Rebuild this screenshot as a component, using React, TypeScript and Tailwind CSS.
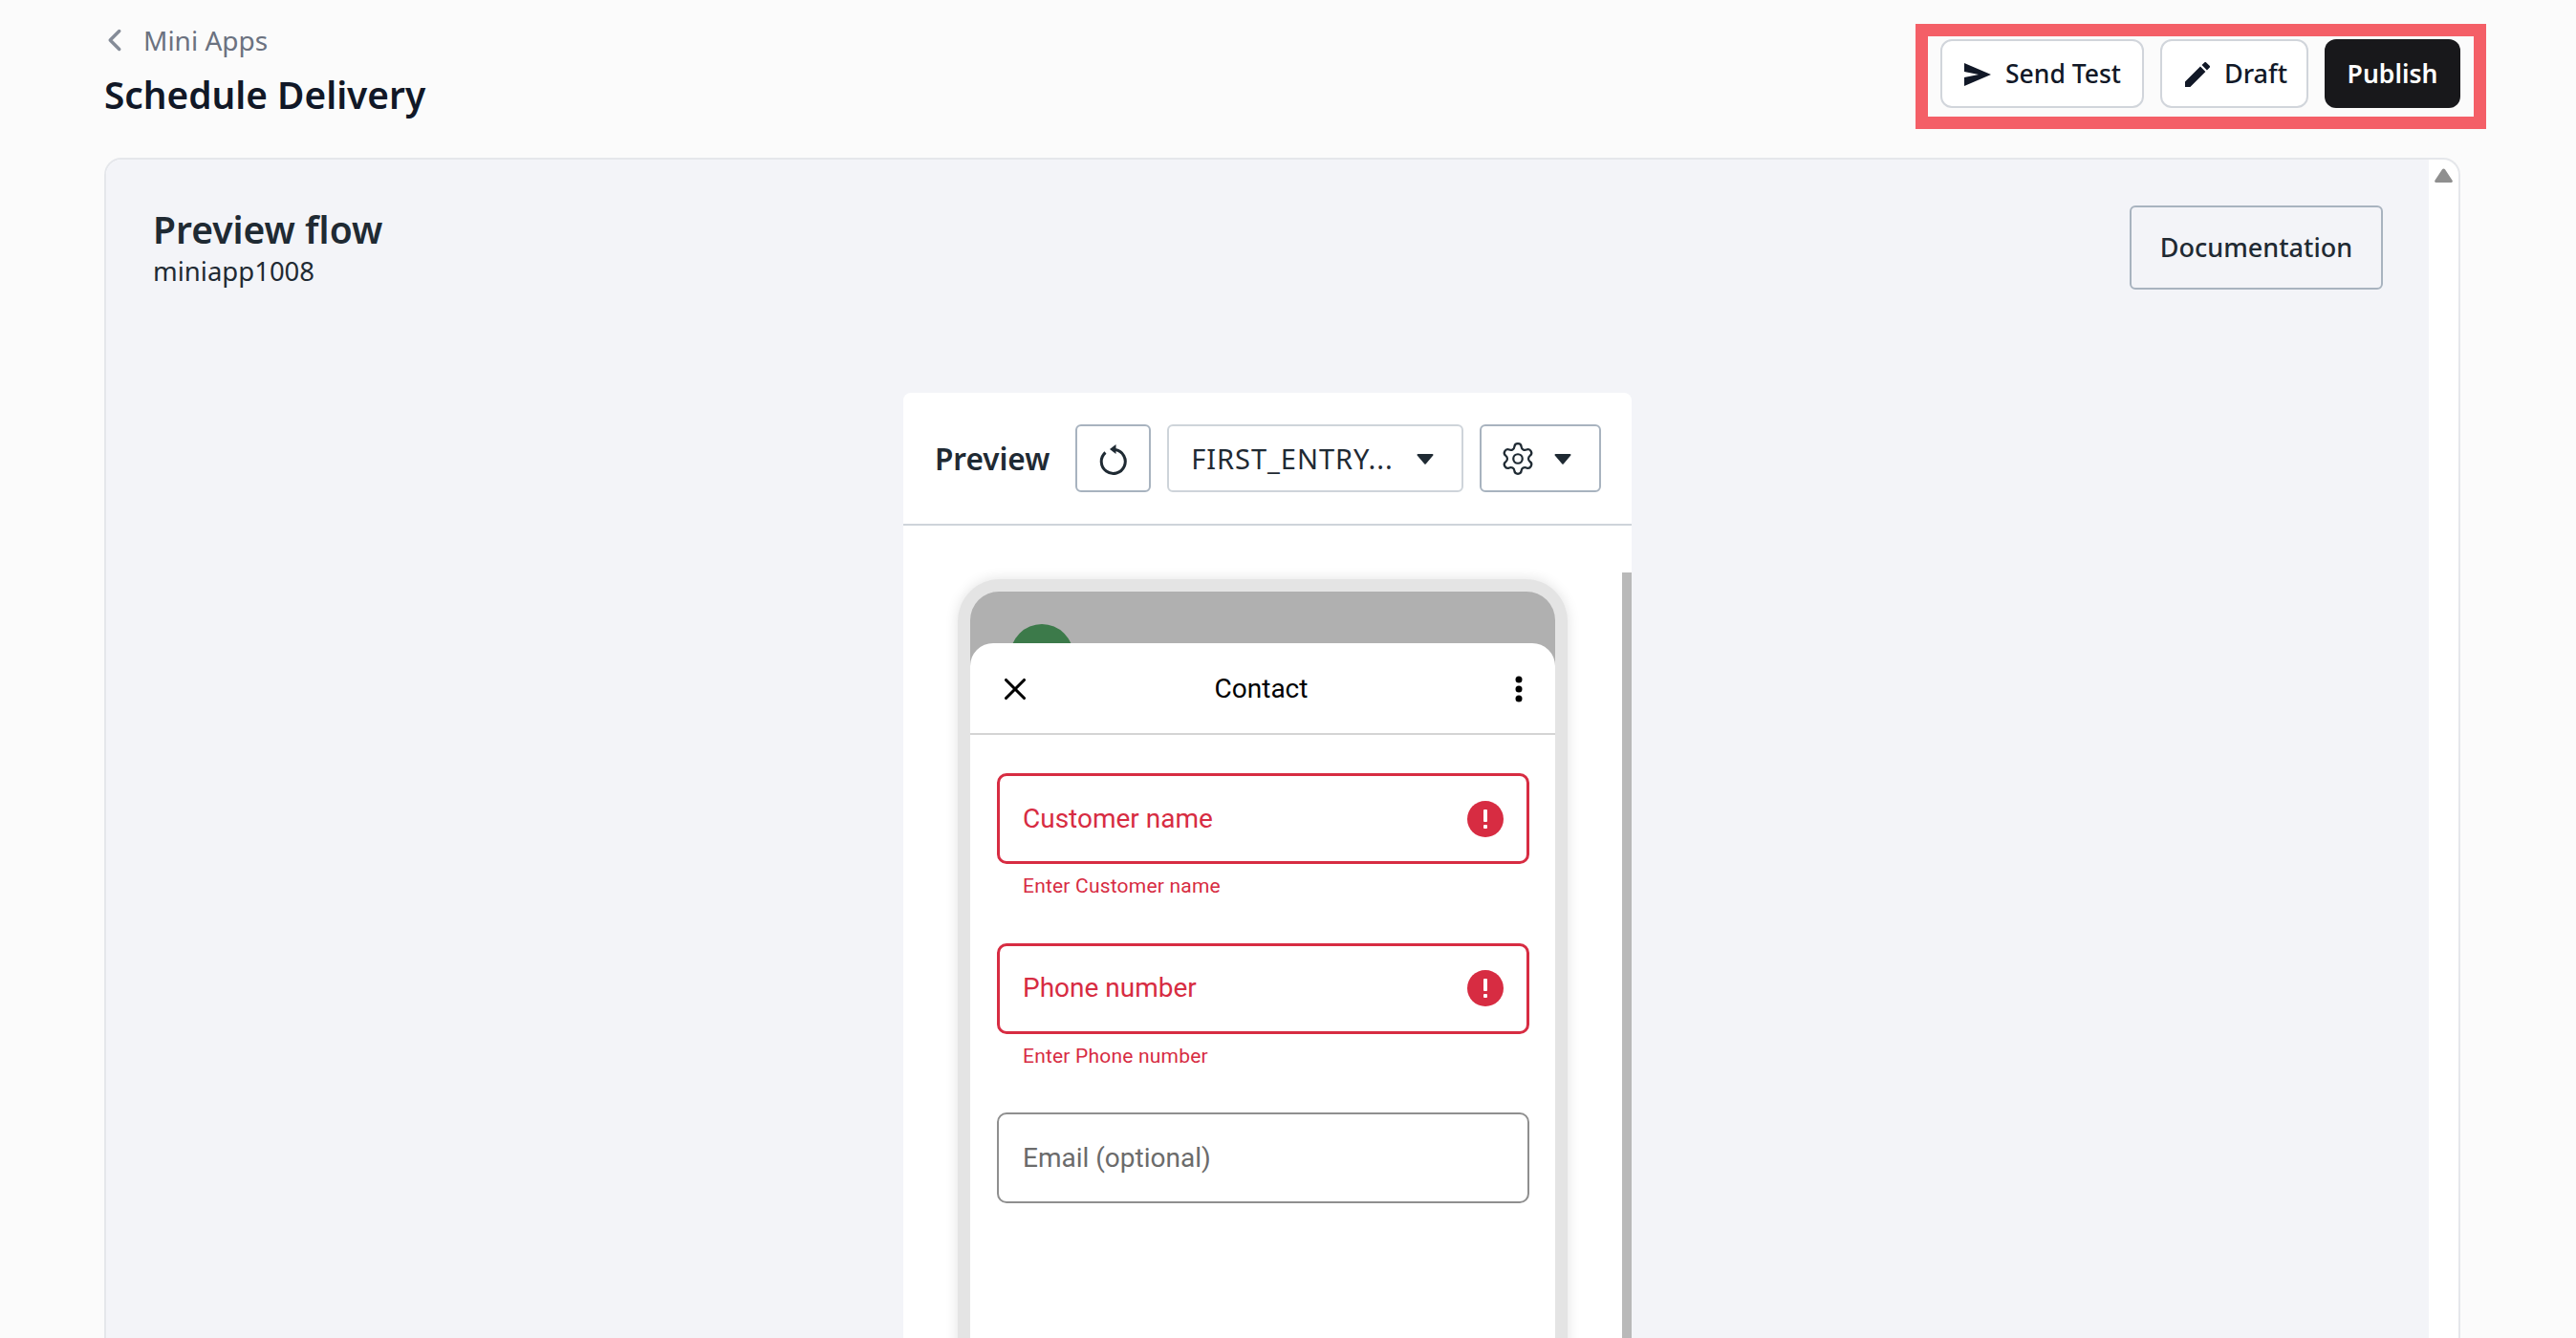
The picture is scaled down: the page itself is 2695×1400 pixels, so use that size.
import { ChevronLeft, Settings, X } from "lucide-react"

const ui = "font-['Noto_Sans',sans-serif]"
const phone = "font-['Roboto',sans-serif]"

const Caret = () => (
    <svg width="18" height="12" viewBox="0 0 18 12" className="shrink-0 text-[#1f2a33]">
        <path d="M1.5 1h15a1 1 0 0 1 .8 1.6l-7.4 8.6a1.2 1.2 0 0 1-1.8 0L.7 2.6A1 1 0 0 1 1.5 1z" fill="currentColor" />
    </svg>
)

const AlertDot = () => (
    <svg width="38" height="38" viewBox="0 0 38 38" className="shrink-0">
        <circle cx="19" cy="19" r="19" fill="#d72c42" />
        <rect x="17" y="9" width="4" height="13" rx="1" fill="white" />
        <rect x="17" y="25" width="4" height="4" rx="1" fill="white" />
    </svg>
)

const ErrorField = ({ label, hint }: { label: string; hint: string }) => (
    <div className="flex flex-col">
        <div className="flex h-[95px] items-center justify-between rounded-[10px] border-[3px] border-[#d72c42] pl-6 pr-[24px]">
            <span className="text-[28px] text-[#d72c42]">{label}</span>
            <AlertDot />
        </div>
        <span className="mt-[12px] h-[70.5px] pl-[27px] text-[21px] leading-[22px] tracking-[0.2px] text-[#d72c42]">{hint}</span>
    </div>
)

const App = () => {
    return (
        <div className={`${ui} flex h-[1400px] w-[2695px] flex-col overflow-hidden bg-[#fbfbfb] pl-[109px] pr-[121px]`}>

            {/* header */}
            <div className="flex h-[165px] shrink-0 justify-between">
                <div className="flex flex-col pt-[22px]">
                    <div className="-ml-[8px] flex h-[40px] items-center gap-[11px] text-[28px] text-[#6b7280]">
                        <ChevronLeft size={38} strokeWidth={2.2} className="text-[#858c98]" />
                        <span>Mini Apps</span>
                    </div>
                    <h1 className="mt-[9px] text-[38.8px] leading-[56px] font-semibold text-[#111827]">Schedule Delivery</h1>
                </div>

                <div className="relative mt-[41px] flex h-[72px] gap-[17px]">
                    <div className="absolute -top-[16px] -right-[27px] -bottom-[22px] -left-[26px] border-[13px] border-[#f45f67]"></div>
                    <button className="flex w-[213px] items-center gap-[15px] rounded-[12px] border-2 border-[#d1d5db] bg-white pl-[23px] pt-[1px] text-[26.5px] font-medium text-[#111827]">
                        <svg width="28" height="24" viewBox="0 0 28 24" className="shrink-0">
                            <path d="M0 0l28 12L0 24v-9l15-3L0 9z" fill="#111827" />
                        </svg>
                        Send Test
                    </button>
                    <button className="flex w-[155px] items-center gap-[15px] rounded-[12px] border-2 border-[#d1d5db] bg-white pl-[24px] pt-[1px] text-[27px] font-medium text-[#111827]">
                        <svg width="26" height="26" viewBox="3 3 18 18" className="shrink-0">
                            <path d="M3 17.25V21h3.75L17.81 9.94l-3.75-3.75L3 17.25zM20.71 7.04a1 1 0 0 0 0-1.41l-2.34-2.34a1 1 0 0 0-1.41 0l-1.83 1.83 3.75 3.75 1.83-1.83z" fill="#111827" />
                        </svg>
                        Draft
                    </button>
                    <button className="w-[142px] rounded-[12px] bg-[#18181b] pt-[1px] text-[26.5px] font-semibold text-white">Publish</button>
                </div>
            </div>

            {/* card */}
            <div className="flex min-h-0 flex-1 rounded-t-[18px] border-2 border-b-0 border-[#e5e7eb] bg-white">
                <div className="flex min-w-0 flex-1 flex-col rounded-tl-[16px] bg-[#f3f4f8] pl-[49px] pr-[48px] pt-[48px]">
                    <div className="flex items-start justify-between">
                        <div className="flex flex-col">
                            <h2 className="-mt-[1px] text-[39px] leading-[52px] font-semibold text-[#1f2a33]">Preview flow</h2>
                            <span className="mt-[1px] text-[27.5px] leading-[34px] text-[#1f2a33]">miniapp1008</span>
                        </div>
                        <button className="h-[88px] w-[265px] rounded-[6px] border-2 border-[#a8b3bf] pt-[1px] text-[27px] font-medium text-[#1f2a33]">Documentation</button>
                    </div>

                    {/* preview panel */}
                    <div className="ml-[785px] mt-[108px] flex w-[762px] flex-1 flex-col rounded-t-[8px] bg-white">
                        <div className="flex h-[139px] shrink-0 items-center gap-[17px] border-b-2 border-[#ced4da] pl-[33px]">
                            <span className="mr-[10px] text-[31.5px] font-semibold text-[#1f2a33]">Preview</span>
                            <button className="flex h-[71px] w-[79px] items-center justify-center rounded-[6px] border-2 border-[#a8b3bf]">
                                <svg width="32" height="34" viewBox="0 0 32 34" fill="none">
                                    <path d="M18 7.6A12.5 12.5 0 1 1 7.5 10.5" stroke="#1f2a33" strokeWidth="3" />
                                    <path d="M12 7l6.5-5v10z" fill="#1f2a33" />
                                </svg>
                            </button>
                            <button className="flex h-[71px] w-[310px] items-center justify-between rounded-[6px] border-2 border-[#ced4da] pl-[23px] pr-[29px] text-[29px] tracking-[0.95px] text-[#1f2a33]">
                                FIRST_ENTRY...
                                <Caret />
                            </button>
                            <button className="flex h-[71px] w-[127px] items-center justify-between rounded-[6px] border-2 border-[#a8b3bf] pl-[19px] pr-[29px] text-[#1f2a33]">
                                <Settings size={38} strokeWidth={1.4} />
                                <Caret />
                            </button>
                        </div>

                        {/* phone */}
                        <div className="relative flex min-h-0 flex-1 justify-start pl-[57px] pt-[56px]">
                            <div className="absolute top-[49px] right-0 bottom-0 w-[10px] bg-[#b9b9b9]"></div>
                            <div className={`${phone} flex h-[900px] w-[638px] flex-col rounded-t-[44px] bg-[#e4e4e4] px-[13px] pt-[13px] shadow-[0_0_14px_rgba(0,0,0,0.12)]`}>
                                <div className="relative flex flex-1 flex-col overflow-hidden rounded-t-[30px] bg-[#b0b0b0]">
                                    <div className="absolute top-[34px] left-[42px] h-[66px] w-[66px] rounded-full bg-[#3c7a4a]"></div>
                                    <div className="relative mt-[54px] flex flex-1 flex-col rounded-t-[24px] bg-white">
                                        <div className="grid h-[96px] shrink-0 grid-cols-[1fr_auto_1fr] items-center border-b-2 border-[#d4d4d4] pl-[28px] pr-[34px] pt-[2px]">
                                            <X size={38} strokeWidth={2} className="text-black" />
                                            <span className="pl-[3px] text-[28px] text-black">Contact</span>
                                            <svg width="8" height="28" viewBox="0 0 8 28" className="justify-self-end">
                                                <circle cx="4" cy="4" r="3.5" fill="black" />
                                                <circle cx="4" cy="14" r="3.5" fill="black" />
                                                <circle cx="4" cy="24" r="3.5" fill="black" />
                                            </svg>
                                        </div>
                                        <div className="flex flex-col pl-[28px] pr-[27px] pt-[40px]">
                                            <ErrorField label="Customer name" hint="Enter Customer name" />
                                            <ErrorField label="Phone number" hint="Enter Phone number" />
                                            <div className="flex h-[95px] items-center rounded-[10px] border-2 border-[#8f8f8f] pl-[25px] text-[28px] text-[#6b6b6b]">Email (optional)</div>
                                        </div>
                                    </div>
                                </div>
                            </div>
                        </div>
                    </div>
                </div>

                {/* scrollbar */}
                <div className="flex w-[31px] shrink-0 justify-center pt-[9px]">
                    <svg width="19" height="15" viewBox="0 0 19 15">
                        <path d="M8 1.2a1.8 1.8 0 0 1 3 0l7.6 11.6a1.4 1.4 0 0 1-1.2 2.2H1.6a1.4 1.4 0 0 1-1.2-2.2z" fill="#8f8f8f" />
                    </svg>
                </div>
            </div>
        </div>
    )
}

export default App
